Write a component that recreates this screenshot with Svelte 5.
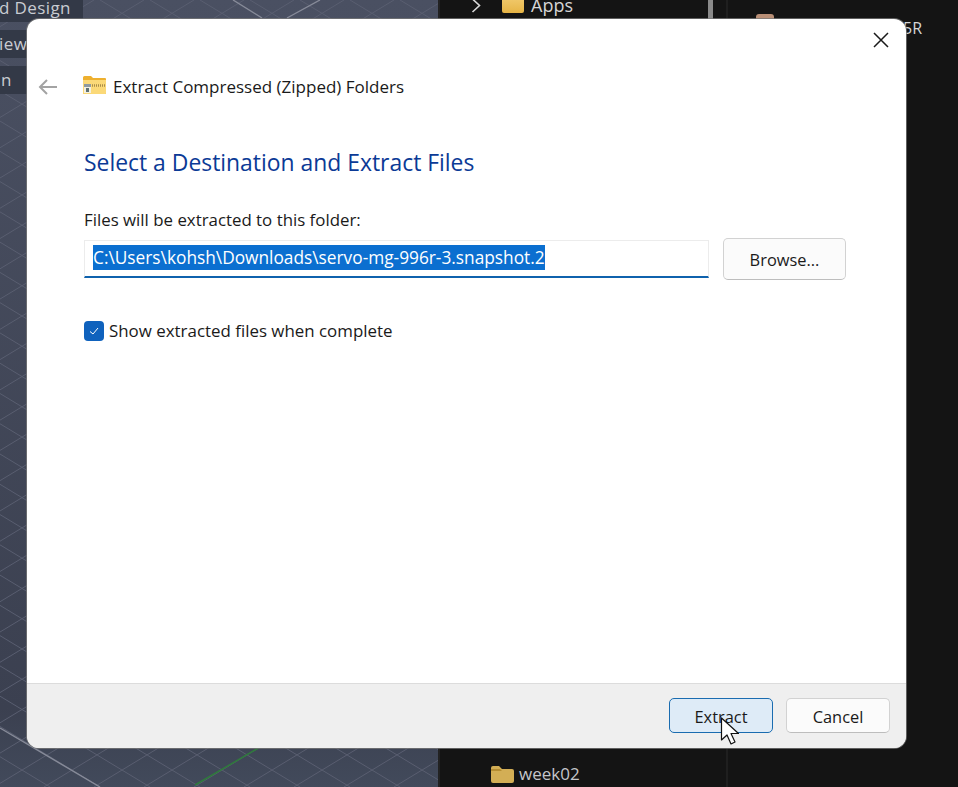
<script lang="ts">
  const destination = "C:\\Users\\kohsh\\Downloads\\servo-mg-996r-3.snapshot.2";

  // perspective-ish grid behind the dialog
  const gridLines: string[] = [];
  for (let i = -30; i < 40; i++) {
    const x = i * 50;
    gridLines.push(`M${x} 0 L${x + 1300} 787`);
    gridLines.push(`M${x + 44} 0 L${x + 44 - 1300} 787`);
  }
</script>

<div class="desktop">
  <div class="viewport">
    <svg class="grid" width="438" height="787" viewBox="0 0 438 787" aria-hidden="true">
      <defs>
        <linearGradient id="floor" x1="0" y1="0" x2="0" y2="1">
          <stop offset="0" stop-color="#4a5062" />
          <stop offset="0.9" stop-color="#3b4050" />
          <stop offset="1" stop-color="#424a5b" />
        </linearGradient>
      </defs>
      <rect width="438" height="787" fill="url(#floor)" />
      {#each gridLines as d}
        <path {d} stroke="#595e70" stroke-width="1" fill="none" />
      {/each}
      <path d="M0 728 L100 787" stroke="#878b99" stroke-width="1.4" fill="none" />
      <path d="M233 0 L262 18" stroke="#878b99" stroke-width="1.4" fill="none" />
      <path d="M320 0 L287 18" stroke="#878b99" stroke-width="1.4" fill="none" />
      <path d="M195 785 L262 746" stroke="#2f7a3c" stroke-width="1.5" fill="none" />
    </svg>
    <div class="tool tool-design">d Design</div>
    <div class="tool tool-view">iew</div>
    <div class="tool tool-n">n</div>
  </div>

  <div class="pane">
    <div class="tree">
      <svg class="chevron" width="12" height="16" viewBox="0 0 12 16" aria-hidden="true">
        <path d="M2.5 1 L9.5 7.5 L2.5 14" fill="none" stroke="#d8d8d8" stroke-width="1.6" />
      </svg>
      <span class="folder apps"></span>
      <span class="tree-label apps-label">Apps</span>
      <span class="scroll-thumb"></span>
    </div>
    <div class="rule"></div>
    <span class="other-label">5R</span>
    <span class="other-icon"></span>
    <div class="week">
      <svg width="23" height="17" viewBox="0 0 23 17" aria-hidden="true">
        <path d="M0 2 Q0 0 2 0 H8 L11 3 H21 Q23 3 23 5 V15 Q23 17 21 17 H2 Q0 17 0 15 Z" fill="#d3ae55" />
        <path d="M0 5 H11 L9 3 H0 Z" fill="#b58d32" />
      </svg>
      <span>week02</span>
    </div>
  </div>

  <div class="dialog">
    <button class="close" aria-label="Close">
      <svg width="16" height="16" viewBox="0 0 16 16" aria-hidden="true">
        <path d="M1 1 L15 15 M15 1 L1 15" stroke="#1a1a1a" stroke-width="1.5" fill="none" />
      </svg>
    </button>

    <div class="titlebar">
      <svg class="back" width="20" height="16" viewBox="0 0 20 16" aria-hidden="true">
        <path d="M19 8 H2 M9 1 L2 8 L9 15" stroke="#a3a3a3" stroke-width="2" fill="none" />
      </svg>
      <svg class="zip" width="23" height="18" viewBox="0 0 23 18" aria-hidden="true">
        <path d="M0 1.5 Q0 0 1.5 0 H8 L10 2 H22 Q23 2 23 3 V17 Q23 18 22 18 H1 Q0 18 0 17 Z" fill="#eeb02f" />
        <path d="M0 4 H23 V17 Q23 18 22 18 H1 Q0 18 0 17 Z" fill="#fbd978" />
        <path d="M9 9.5 H22" stroke="#a98c48" stroke-width="2.4" stroke-dasharray="1 1" fill="none" />
        <rect x="1" y="8" width="7" height="9" fill="#f3f0e2" />
        <rect x="1" y="8" width="7" height="3" fill="#8f9aa0" />
        <rect x="3" y="12" width="3" height="4" fill="#5f7073" />
      </svg>
      <span class="title">Extract Compressed (Zipped) Folders</span>
    </div>

    <div class="body">
      <h1>Select a Destination and Extract Files</h1>
      <div class="label">Files will be extracted to this folder:</div>
      <div class="path-row">
        <div class="path-input"><span class="selected">{destination}</span></div>
        <button class="btn browse">Browse...</button>
      </div>
      <div class="check-row">
        <span class="check">
          <svg width="12" height="12" viewBox="0 0 12 12" aria-hidden="true">
            <path d="M2 6.5 L5 9 L10 3" stroke="#ffffff" stroke-width="1" fill="none" />
          </svg>
        </span>
        <span>Show extracted files when complete</span>
      </div>
    </div>

    <div class="footer">
      <button class="btn action extract">Extract</button>
      <button class="btn action">Cancel</button>
      <svg class="cursor" width="21" height="30" viewBox="0 0 21 30" aria-hidden="true">
        <path d="M1.5 1 V23 L7 18 L11 27 L15 25 L11 16.5 L18.5 16.5 Z" fill="#ffffff" stroke="#111111" stroke-width="1.2" stroke-linejoin="round" />
      </svg>
    </div>
  </div>
</div>

<style>
  :global(body) {
    margin: 0;
    background: #141414;
  }

  .desktop {
    position: relative;
    display: flex;
    width: 958px;
    height: 787px;
    overflow: hidden;
    font-family: "Open Sans", "Noto Sans", sans-serif;
    color: #1a1a1a;
  }

  .viewport {
    position: relative;
    width: 438px;
    flex: none;
  }

  .grid {
    display: block;
  }

  .tool {
    position: absolute;
    left: 0;
    background: #333947;
    color: #c9ccd2;
    font-size: 17px;
    line-height: 28px;
    letter-spacing: 0.4px;
    white-space: nowrap;
  }

  .tool-design {
    top: -6px;
    width: 83px;
    text-indent: -1px;
  }

  .tool-view {
    top: 30px;
    width: 27px;
    text-indent: -1px;
  }

  .tool-n {
    top: 66px;
    width: 27px;
    text-indent: 1px;
  }

  .pane {
    position: relative;
    flex: 1;
    background: #141414;
    color: #d6d6d6;
    border-left: 2px solid #222;
  }

  .tree {
    position: absolute;
    left: 0;
    top: -8px;
    width: 274px;
    height: 28px;
  }

  .chevron {
    position: absolute;
    left: 30px;
    top: 6px;
  }

  .folder {
    position: absolute;
    left: 62px;
    top: 0;
    width: 22px;
    height: 21px;
    background: linear-gradient(#f5d27c, #e6b445);
    border-radius: 2px;
  }

  .tree-label {
    position: absolute;
    left: 91px;
    top: 1px;
    font-size: 18px;
    line-height: 24px;
  }

  .scroll-thumb {
    position: absolute;
    left: 268px;
    top: 0;
    width: 5px;
    height: 40px;
    background: #8a8a8a;
  }

  .rule {
    position: absolute;
    left: 286px;
    top: 0;
    bottom: 0;
    width: 2px;
    background: #1f1f1f;
  }

  .other-label {
    position: absolute;
    left: 463px;
    top: 17px;
    font-size: 16px;
    line-height: 22px;
  }

  .other-icon {
    position: absolute;
    left: 316px;
    top: 14px;
    width: 18px;
    height: 10px;
    background: #b98f76;
    border-radius: 3px 3px 0 0;
  }

  .week {
    position: absolute;
    left: 51px;
    top: 762px;
    display: flex;
    align-items: center;
    gap: 5px;
    font-size: 17px;
    line-height: 24px;
    color: #c4c6ca;
  }

  .dialog {
    position: absolute;
    left: 27px;
    top: 19px;
    width: 879px;
    height: 729px;
    display: flex;
    flex-direction: column;
    background: #fff;
    border-radius: 12px;
    overflow: hidden;
    box-shadow: 0 0 0 1px rgba(120, 120, 120, 0.75);
  }

  .close {
    position: absolute;
    right: 17px;
    top: 13px;
    width: 16px;
    height: 16px;
    padding: 0;
    border: 0;
    background: none;
    display: flex;
  }

  .titlebar {
    display: flex;
    align-items: center;
    height: 32px;
    margin-top: 52px;
    padding-left: 11px;
  }

  .zip {
    margin-left: 25px;
    margin-top: -4px;
  }

  .title {
    margin-left: 7px;
    font-size: 17px;
    letter-spacing: 0;
    line-height: 32px;
  }

  .body {
    flex: 1;
    padding: 0 60px 0 57px;
  }

  h1 {
    margin: 44px 0 0;
    font-size: 22.9px;
    font-weight: 400;
    line-height: 32px;
    color: #0b3a96;
  }

  .label {
    margin-top: 30px;
    font-size: 16.85px;
    line-height: 22px;
  }

  .path-row {
    display: flex;
    align-items: flex-start;
    gap: 14px;
    margin-top: 9px;
  }

  .path-input {
    box-sizing: border-box;
    width: 625px;
    height: 38px;
    padding: 4px 0 0 8px;
    border: 1px solid #ececec;
    border-bottom: 2px solid #0f62ad;
    background: #fff;
    white-space: nowrap;
    font-size: 17.3px;
    line-height: 25px;
  }

  .selected {
    display: inline-block;
    background: #0b6fd0;
    color: #fff;
  }

  .btn {
    box-sizing: border-box;
    width: 104px;
    height: 35px;
    padding: 0;
    border: 1px solid #d2d2d2;
    border-bottom-color: #bdbdbd;
    border-radius: 5px;
    background: #fbfbfb;
    font: inherit;
    font-size: 16.4px;
    color: #1a1a1a;
  }

  .action {
    padding-top: 2px;
  }

  .browse {
    width: 123px;
    height: 42px;
    margin-top: -2px;
  }

  .check-row {
    display: flex;
    align-items: center;
    gap: 5px;
    margin-top: 40px;
    font-size: 16.9px;
    line-height: 22px;
  }

  .check {
    display: flex;
    align-items: center;
    justify-content: center;
    width: 20px;
    height: 20px;
    background: #0f62bd;
    border-radius: 4px;
  }

  .footer {
    position: relative;
    display: flex;
    justify-content: flex-end;
    gap: 13px;
    box-sizing: border-box;
    height: 65px;
    padding: 14px 16px 0 0;
    background: #efefef;
    border-top: 1px solid #dcdcdc;
  }

  .extract {
    background: #deebf7;
    border-color: #1a6cb0;
  }

  .cursor {
    position: absolute;
    left: 693px;
    top: 33px;
  }
</style>
